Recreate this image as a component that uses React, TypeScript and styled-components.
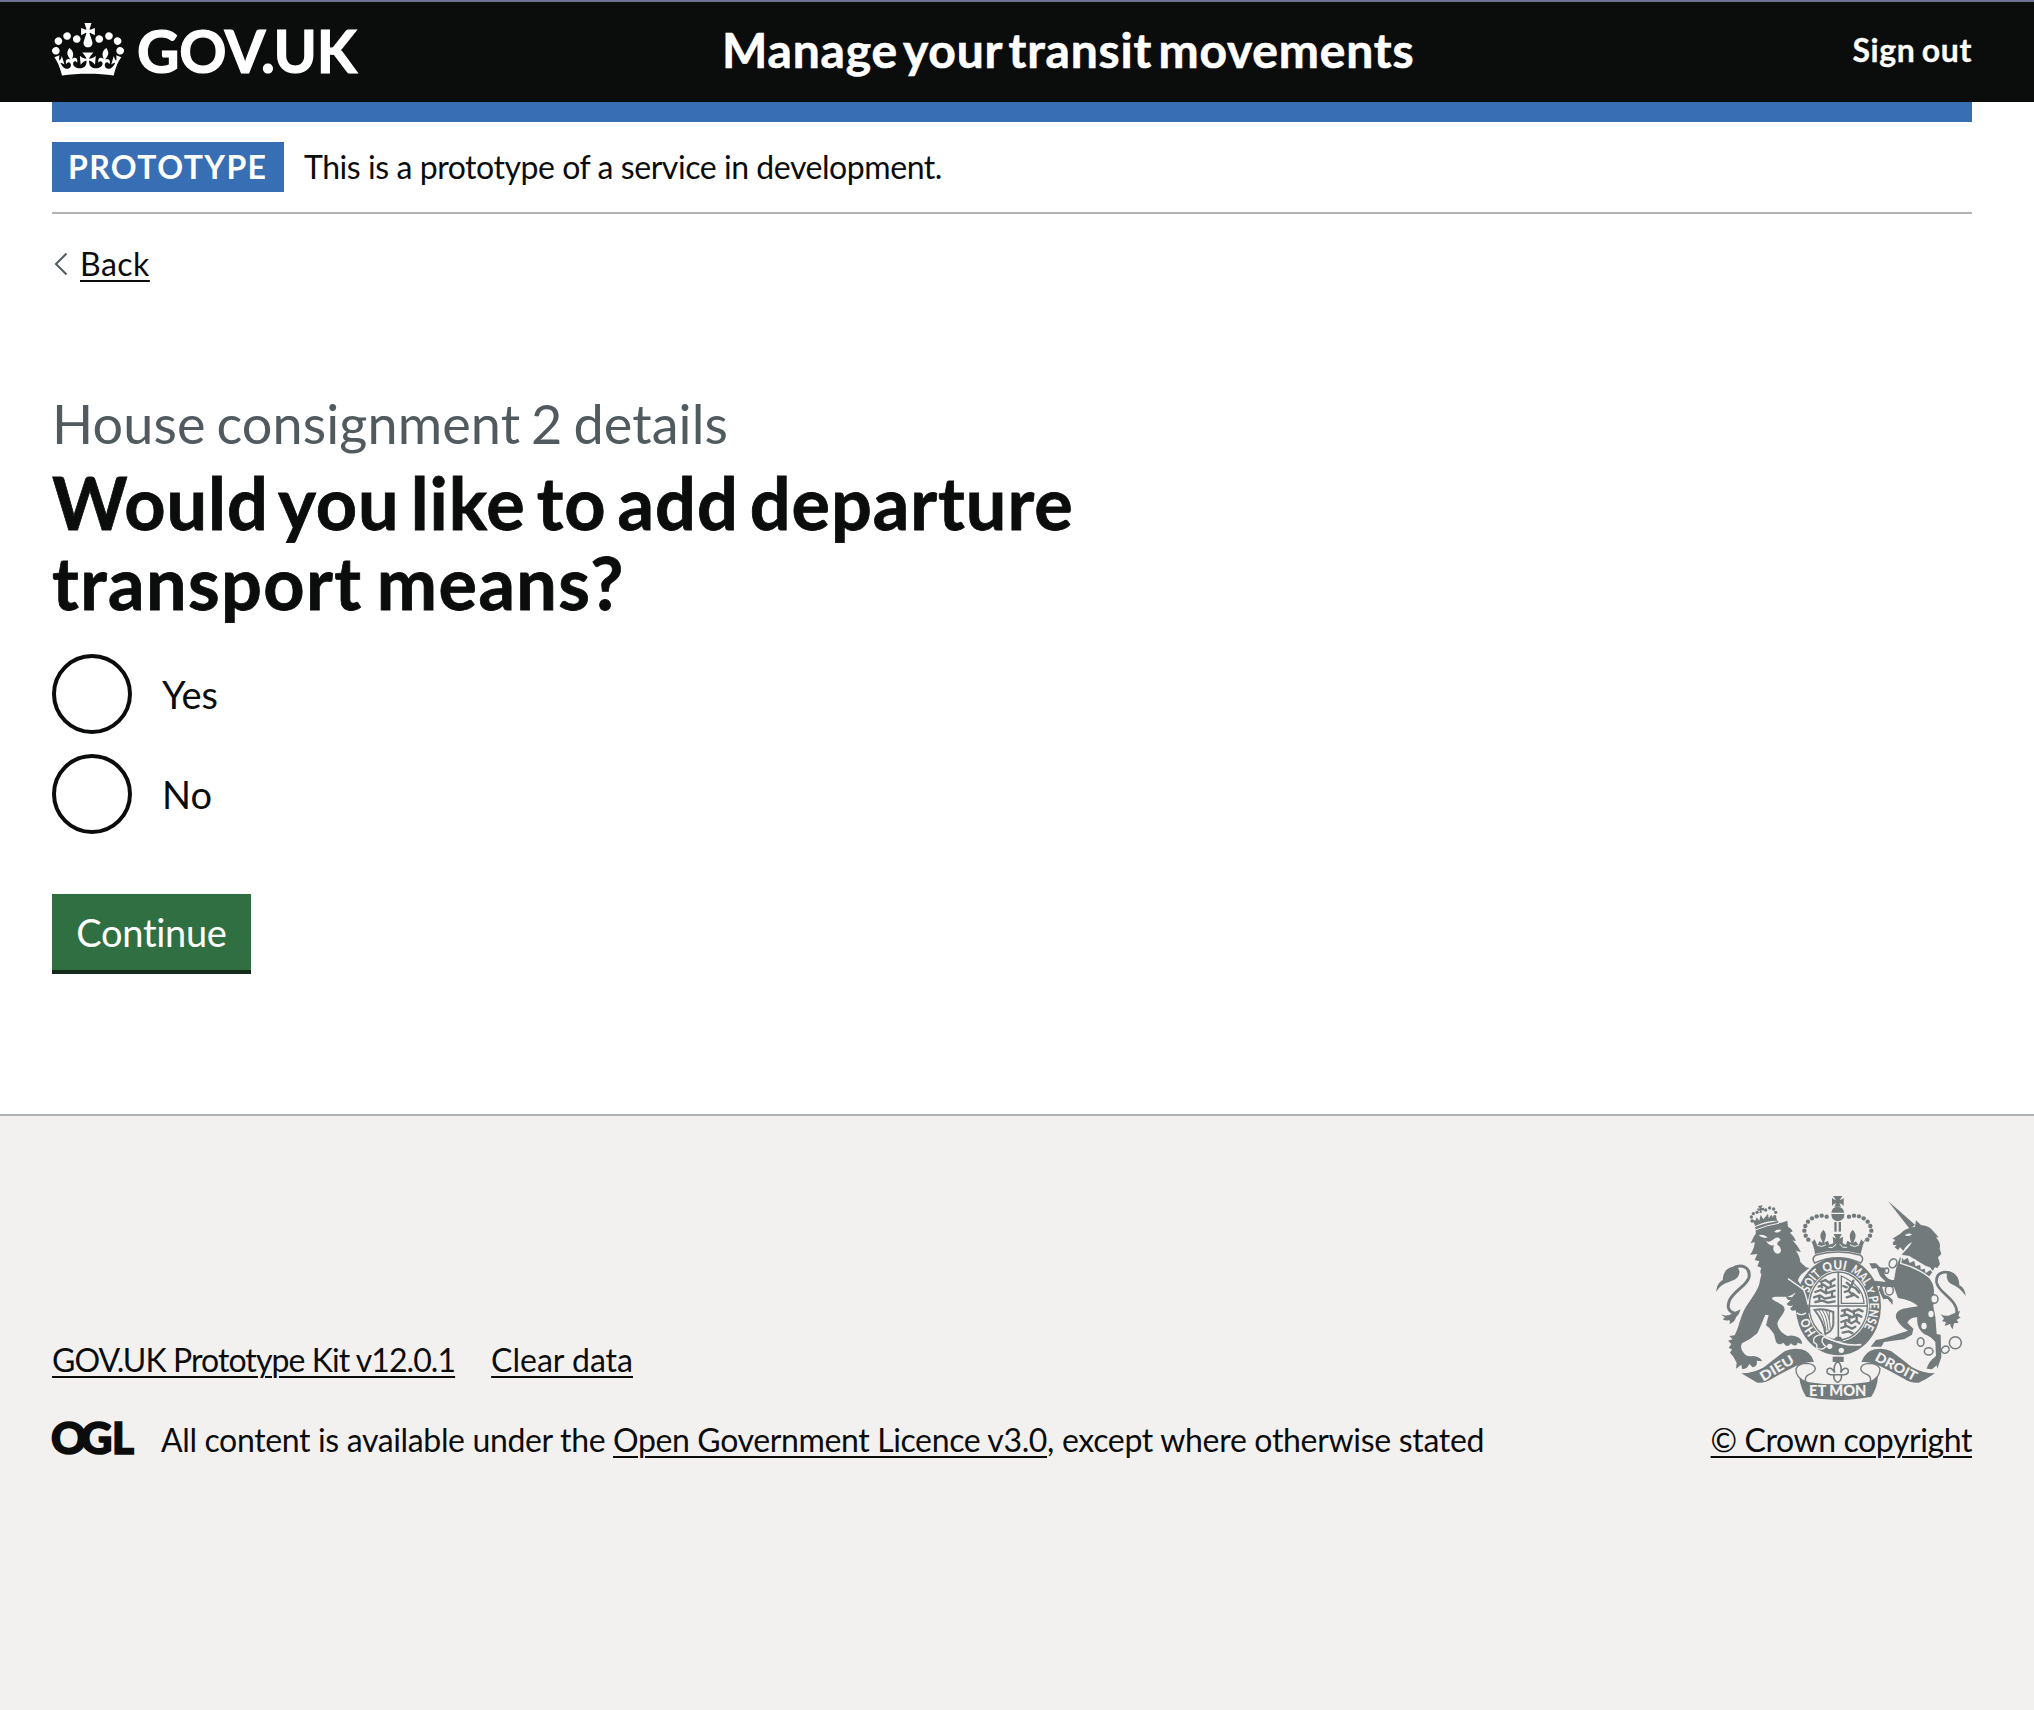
import React from "react";
import styled, { createGlobalStyle } from "styled-components";

const ink = "#0b0c0c";
const blue = "#386eb4";
const crestGrey = "#727a7c";
const footerGrey = "#f3f1f0";

const GlobalStyle = createGlobalStyle`
  html, body { margin: 0; padding: 0; background: #fff; }
  body {
    font-family: Lato, "Noto Sans", Arial, sans-serif;
    color: ${ink};
    -webkit-font-smoothing: antialiased;
  }
  *, *::before, *::after { box-sizing: border-box; }
`;

const Page = styled.div`
  display: flex;
  flex-direction: column;
  min-height: 1710px;
`;

const Container = styled.div`
  margin: 0 62px 0 52px;
`;

const Header = styled.header`
  background: ${ink};
  color: #fff;
  border-top: 2px solid #70728f;
  height: 102px;
`;

const HeaderRow = styled(Container)`
  display: grid;
  grid-template-columns: 670px 1fr auto;
  align-items: center;
  height: 96px;
`;

const Logo = styled.a`
  display: flex;
  align-items: center;
  color: #fff;
  text-decoration: none;
`;

const Crown = styled.svg`
  width: 72px;
  height: 53px;
  margin: 0 13px 2px 0;
`;

const LogoText = styled.span`
  font-size: 58.5px;
  line-height: 96px;
  font-weight: 700;
  letter-spacing: -0.3px;
  -webkit-text-stroke: 1.2px #fff;
`;

const ServiceName = styled.span`
  font-size: 48px;
  line-height: 60px;
  font-weight: 700;
  letter-spacing: 0.8px;
  word-spacing: -6.2px;
  -webkit-text-stroke: 0.6px #fff;
`;

const SignOut = styled.a`
  font-size: 32px;
  line-height: 40px;
  font-weight: 700;
  letter-spacing: 0.6px;
  word-spacing: -2px;
  -webkit-text-stroke: 0.3px #fff;
`;

const BlueBar = styled.div`
  height: 20px;
  background: ${blue};
`;

const PhaseBanner = styled.div`
  display: flex;
  align-items: center;
  gap: 20px;
  padding: 20px 0;
  border-bottom: 2px solid #b2b3b4;
`;

const Tag = styled.strong`
  display: block;
  width: 232px;
  padding-left: 16px;
  background: ${blue};
  color: #fff;
  font-size: 32px;
  line-height: 50px;
  font-weight: 700;
  letter-spacing: 1.4px;
  white-space: nowrap;
`;

const Text = styled.span<{ $track?: number }>`
  font-size: 32px;
  line-height: 40px;
  letter-spacing: ${(p) => p.$track ?? 0}px;
  white-space: pre;
`;

const Link = styled.a<{ $track?: number }>`
  font-size: 32px;
  line-height: 40px;
  letter-spacing: ${(p) => p.$track ?? 0}px;
  color: ${ink};
  text-decoration: underline;
  text-decoration-thickness: 2px;
  text-underline-offset: 4px;
  white-space: nowrap;
`;

const BackRow = styled.div`
  display: flex;
  align-items: center;
  margin-top: 30px;
  height: 40px;
`;

const Chevron = styled.svg`
  width: 14px;
  height: 24px;
  margin: 0 12px 1px 2px;
`;

const Main = styled.main`
  padding-top: 110px;
  height: 830px;
`;

const Caption = styled.span`
  display: block;
  color: #505a5f;
  font-size: 54px;
  line-height: 60px;
  letter-spacing: 0.1px;
  word-spacing: -3px;
`;

const Heading = styled.h1`
  margin: 8px 0 32px;
  font-size: 72px;
  line-height: 80px;
  font-weight: 700;
  -webkit-text-stroke: 0.8px ${ink};
`;

const HeadingLine = styled.span<{ $track: number; $word: number }>`
  display: block;
  letter-spacing: ${(p) => p.$track}px;
  word-spacing: ${(p) => p.$word}px;
`;

const Radios = styled.div`
  display: flex;
  flex-direction: column;
  gap: 20px;
`;

const RadioRow = styled.label`
  display: flex;
  align-items: center;
  gap: 30px;
  height: 80px;
  font-size: 38px;
  line-height: 50px;
`;

const RadioInput = styled.input`
  appearance: none;
  margin: 0;
  width: 80px;
  height: 80px;
  border: 4px solid ${ink};
  border-radius: 50%;
  background: transparent;
`;

const Button = styled.button`
  display: block;
  margin-top: 60px;
  width: 199px;
  height: 80px;
  padding: 0;
  border: 0;
  border-bottom: 4px solid #142b1c;
  background: #2f6f42;
  color: #fff;
  font-family: inherit;
  font-size: 38px;
  line-height: 38px;
  letter-spacing: -0.3px;
`;

const Footer = styled.footer`
  flex: 1;
  border-top: 2px solid #b2b3b4;
  background: ${footerGrey};
  padding-top: 79px;
`;

const FooterRow = styled(Container)`
  display: flex;
  justify-content: space-between;
  align-items: flex-end;
`;

const FooterLinks = styled.div`
  display: flex;
  gap: 36px;
  margin-bottom: 40px;
`;

const Licence = styled.div`
  display: flex;
  align-items: center;
  height: 40px;
`;

const OglLogo = styled.svg`
  width: 82px;
  height: 34px;
  margin: 0 27px 5px 0;
  overflow: visible;
`;

const Copyright = styled.div`
  display: flex;
  flex-direction: column;
  align-items: flex-end;
`;

const Crest = styled.svg`
  width: 252px;
  height: 206px;
  margin: 0 5px 19px 0;
  display: block;
`;

const ARC_BEADS: [number, number][] = [
  [380, 110], [365, 107], [350, 109], [336, 115], [324, 125],
  [316, 138], [313, 152], [317, 167], [325, 179],
];

const LION_CROWN_BEADS: [number, number][] = [
  [171, 97], [160, 101], [154, 111], [156, 123], [197, 90], [209, 84], [221, 87], [227, 97], [224, 110],
];

function CrownGlyph() {
  return (
    <Crown viewBox="0 0 132 97" aria-hidden="true">
      <path
        fill="currentColor"
        fillRule="evenodd"
        d="M25 30.2c3.5 1.5 7.7-.2 9.1-3.7 1.5-3.6-.2-7.8-3.9-9.2-3.6-1.4-7.6.3-9.1 3.9-1.4 3.5.3 7.5 3.9 9zM9 39.5c3.6 1.5 7.8-.2 9.2-3.7 1.5-3.6-.2-7.8-3.9-9.1-3.6-1.5-7.6.2-9.1 3.8-1.4 3.5.3 7.5 3.8 9zM4.4 57.2c3.5 1.5 7.7-.2 9.1-3.8 1.5-3.6-.2-7.7-3.9-9.1-3.5-1.5-7.6.3-9.1 3.8-1.4 3.5.3 7.6 3.9 9.1zm38.3-21.4c3.5 1.5 7.7-.2 9.1-3.8 1.5-3.6-.2-7.7-3.9-9.1-3.6-1.5-7.6.3-9.1 3.8-1.3 3.6.4 7.7 3.9 9.1zm64.4-5.6c-3.6 1.5-7.8-.2-9.1-3.7-1.5-3.6.2-7.8 3.8-9.2 3.6-1.4 7.7.3 9.2 3.9 1.3 3.5-.4 7.5-3.9 9zm15.9 9.3c-3.6 1.5-7.7-.2-9.1-3.7-1.5-3.6.2-7.8 3.7-9.1 3.6-1.5 7.7.2 9.2 3.8 1.5 3.5-.3 7.5-3.8 9zm4.7 17.7c-3.6 1.5-7.8-.2-9.2-3.8-1.5-3.6.2-7.7 3.9-9.1 3.6-1.5 7.7.3 9.2 3.8 1.3 3.5-.4 7.6-3.9 9.1zM89.3 35.8c-3.6 1.5-7.8-.2-9.2-3.8-1.4-3.6.2-7.7 3.9-9.1 3.6-1.5 7.7.3 9.2 3.8 1.4 3.6-.3 7.7-3.9 9.1zM69.7 17.7l8.9 4.7V9.3l-8.9 2.8c-.2-.3-.5-.6-.9-.9L72.4 0H59.6l3.5 11.2c-.3.3-.6.5-.9.9l-8.8-2.8v13.1l8.8-4.7c.3.3.6.7.9.9l-5 15.4v.1c-.2.8-.4 1.6-.4 2.4 0 4.1 3.1 7.5 7 8.1h.2c.3 0 .7.1 1 .1.4 0 .7 0 1-.1h.2c4-.6 7.1-4.1 7.1-8.1 0-.8-.1-1.7-.4-2.4V34l-5.1-15.4c.4-.2.7-.6 1-.9zM66 92.8c16.9 0 32.8 1.1 47.1 3.2 4-16.9 8.9-26.7 14-33.5l-9.6-3.4c1 4.9 1.1 7.2 0 10.2-1.5-1.4-3-4.3-4.2-8.7L108.6 76c2.8-2 5-3.2 7.5-3.3-4.4 9.4-10 11.9-13.6 11.2-4.3-.8-6.3-4.6-5.6-7.9 1-4.7 5.7-5.9 8-.5 4.3-8.7-3-11.4-7.6-8.8 7.1-7.2 7.9-13.5 2.1-21.1-8 6.1-8.1 12.3-4.5 20.8-4.7-5.4-12.1-2.5-9.5 6.2 3.4-5.2 7.9-2 7.2 3.1-.6 4.3-6.4 7.8-13.5 7.2-10.3-.9-10.9-8-11.2-13.8 2.5-.5 7.1 1.8 11 7.3L80.2 60c-4.1 4.4-8 5.3-12.3 5.4 1.4-4.4 8-11.6 8-11.6H55.5s6.4 7.2 7.9 11.6c-4.2-.1-8-1-12.3-5.4l1.4 16.4c3.9-5.5 8.5-7.7 10.9-7.3-.3 5.8-.9 12.8-11.1 13.8-7.2.6-12.9-2.9-13.5-7.2-.7-5 3.8-8.3 7.1-3.1 2.7-8.7-4.6-11.6-9.4-6.2 3.7-8.5 3.6-14.7-4.6-20.8-5.8 7.6-5 13.9 2.2 21.1-4.7-2.6-11.9.1-7.7 8.8 2.3-5.5 7.1-4.2 8.1.5.7 3.3-1.3 7.1-5.7 7.9-3.5.7-9-1.8-13.5-11.2 2.5.1 4.7 1.3 7.5 3.3l-4.7-15.4c-1.2 4.4-2.7 7.2-4.3 8.7-1.1-3-.9-5.3 0-10.2l-9.5 3.4c5 6.9 9.9 16.7 14 33.5 14.8-2.1 30.8-3.2 47.7-3.2z"
      />
    </Crown>
  );
}

function RoyalArms() {
  const c = crestGrey;
  const b = footerGrey;
  const word = { fontFamily: "Lato, sans-serif", fontWeight: 900, fontSize: 38, fill: b, lengthAdjust: "spacingAndGlyphs" as const };
  return (
    <Crest viewBox="45 45 756 618" aria-hidden="true">
      {/* lion: tail, body, crown */}
      <g fill={c}>
        <path d="M49 336C50 318 55 308 68 300C70 280 76 266 96 261C114 260 120 268 118 280C114 302 88 304 72 312C62 318 54 326 49 336Z" />
        <path d="M96 266C124 248 152 262 147 292C140 318 104 330 88 362C80 384 86 398 112 402" fill="none" stroke={c} strokeWidth="9" />
        <path d="M64 403Q82 412 98 399L122 388Q118 404 108 412Q104 428 88 432Q92 424 88 420Q78 424 68 418Q76 414 74 411Q68 409 64 403Z" />
        <path d="M166 146C190 140 235 132 262 122L264 140Q276 146 278 154L270 158Q282 168 288 184L278 181Q292 196 303 216L288 212Q300 230 301 246L318 262L328 264L310 278Q296 288 294 302L312 330L326 372L330 398L314 404L306 396Q296 404 290 398L286 390Q276 396 270 386L280 376Q266 382 260 372L272 360Q262 362 258 350L276 352L286 340L262 298L292 330Q284 344 262 350L226 350Q212 352 217 358C232 370 254 372 254 388C252 404 234 416 232 432Q236 456 262 468Q280 464 294 472Q306 478 306 492L292 488Q294 498 280 496L272 490Q268 502 256 496L250 488Q236 498 228 486L222 462L208 444L198 436L206 406L196 404Q182 438 172 460Q150 480 126 490Q118 506 132 520Q140 532 160 528Q184 532 186 544L170 542Q174 558 158 562L148 552Q140 570 126 566L124 554L108 566L110 548L100 530L90 518L96 508L86 504L94 492L84 482L98 478L88 468L104 466C118 440 120 410 138 380C158 350 178 326 180 300L184 284Q178 276 184 264L172 258L178 244L164 240L172 222L150 224Q164 206 164 186L152 190Q160 170 168 160Z" />
        <path d="M164 142C184 132 212 128 236 122L232 132C210 138 190 142 172 150Z" />
        <path d="M164 134L156 118L166 122L170 112L178 122L182 104L190 118L204 101L206 115L214 104L220 114L226 106L232 122Q196 122 166 138Z" />
        {LION_CROWN_BEADS.map(([x, y]) => <circle key={x} cx={x} cy={y} r="5" />)}
        <path d="M174 78L188 76L184 84L192 83L192 92L184 90L186 98L178 99L180 91L173 94L172 85L179 86Z" />
      </g>
      <g fill={b}>
        <path d="M176 166Q190 160 203 172Q190 178 176 166ZM222 156Q232 146 244 150Q238 160 222 156Z" />
        <path d="M198 182Q206 188 214 182L226 174Q238 170 242 180Q230 186 232 194Q246 202 242 216Q232 228 222 214Q218 206 222 196Q206 198 198 182Z" />
        <path d="M166 150Q204 134 236 130" fill="none" stroke={b} strokeWidth="3" />
      </g>

      {/* unicorn: tail, body, horn */}
      <g fill={c}>
        <path d="M797 348C795 332 790 322 778 316C778 296 768 276 744 274C738 284 738 304 754 312C770 318 786 330 797 348Z" />
        <path d="M752 280C728 270 706 282 710 308C716 336 758 352 768 382C774 400 768 410 748 414" fill="none" stroke={c} strokeWidth="8" />
        <path d="M722 402Q738 412 752 404L780 392L775 408L782 412L770 420L776 428L762 430L758 448Q752 442 750 432L734 438L738 426L726 424L732 416Z" />
        <path d="M564 63L645 134L630 148Z" />
        <path d="M645 140L648 121L663 135Q690 138 700 154L716 172L708 172Q724 190 719 206L724 222L714 232L720 252L712 264L704 262L698 274L690 262L678 258L654 244L628 228L604 224Q628 202 636 186Q620 194 610 212L600 202L594 210L584 202L590 194L580 196L578 188L586 180L577 176L600 162Q614 144 645 140Z" />
        <path d="M600 232Q592 252 588 266L582 300L576 300Q556 296 552 276L562 280L558 264L540 262L528 250L508 250L516 266L530 264L540 288L558 306L524 302L528 318L540 318L536 330L550 358L562 356L578 374L578 360L568 350L554 344L546 320L582 322L594 354Q634 360 654 378C630 386 584 380 588 414Q600 440 624 452L548 476L528 480L512 500L544 500L552 486L612 478L636 464L640 446L622 428Q630 412 652 412Q648 444 672 462Q694 470 706 486L708 528Q684 546 680 566L696 568L710 556L712 566L724 532L722 464L710 462L706 410L700 380L702 330Q700 306 682 288Z" />
      </g>
      <path d="M606 226L612 238L624 230L630 246L644 240L648 256L662 252L664 266L676 264L678 276L690 268L700 276L688 292Q650 262 602 250Z" fill={c} stroke={b} strokeWidth="4" />
      <path d="M614 166Q622 158 636 162Q630 172 614 166Z" fill={b} />
      <g fill="none" stroke={c} strokeWidth="4.5">
        <ellipse cx="579" cy="250" rx="11" ry="14" transform="rotate(25 579 250)" />
        <ellipse cx="568" cy="331" rx="12" ry="14" />
        <ellipse cx="703" cy="357" rx="11" ry="13" fill={b} />
        <ellipse cx="662" cy="486" rx="10" ry="13" />
        <ellipse cx="686" cy="514" rx="13" ry="11" />
        <ellipse cx="736" cy="509" rx="12" ry="10" transform="rotate(-35 736 509)" />
        <circle cx="766" cy="488" r="18" />
      </g>
      <g fill={b}>
        <ellipse cx="693" cy="402" rx="8" ry="10" />
        <ellipse cx="672" cy="438" rx="8" ry="10" />
        <ellipse cx="560" cy="272" rx="6" ry="8" stroke={c} strokeWidth="4" />
      </g>

      {/* crown over the shield */}
      <g fill={c}>
        <path d="M399 48H427L419 60Q427 58 431 53V78Q425 71 418 70L423 80H403L408 70Q401 71 396 78V53Q400 58 408 60Z" />
        <path d="M394 98Q396 80 413 80Q430 80 433 98Z" />
        <path d="M394 102H433Q434 122 413 124Q394 122 394 102Z" />
        <rect x="403" y="126" width="7" height="29" />
        <rect x="416" y="126" width="7" height="29" />
        {ARC_BEADS.map(([x, y]) => (
          <React.Fragment key={x + "-" + y}>
            <circle cx={x} cy={y} r="6.6" />
            <circle cx={827 - x} cy={y} r="6.6" />
          </React.Fragment>
        ))}
        <path d="M328 172L336 186L344 178L352 196L358 184L368 188L362 174Q358 162 370 149Q382 162 376 176L372 188L384 182L388 194L400 190L398 170L408 176L401 162H425L418 176L429 170L428 190L438 194L442 182L454 188L450 176Q446 162 458 149Q470 162 466 174L460 188L468 184L476 196L484 178L490 186L499 172Q486 196 482 222Q448 212 413 212Q378 212 345 222Q342 196 328 172Z" />
      </g>
      <path d="M352 196Q366 204 378 194M386 202Q400 206 408 192M419 192Q427 206 441 202M450 194Q462 204 476 196" fill="none" stroke={b} strokeWidth="3" />

      {/* garter and shield */}
      <ellipse cx="415" cy="379" rx="128" ry="147" fill={c} />
      <path d="M346 226Q413 206 482 226Q494 236 482 249Q413 218 344 249Q334 236 346 226Z" fill={b} stroke={c} strokeWidth="4.5" />
      <ellipse cx="415" cy="378" rx="92" ry="107" fill={b} />
      <ellipse cx="415" cy="378" rx="87" ry="102" fill="none" stroke={c} strokeWidth="4" />
      <path d="M415 276V480M328 378H502" stroke={c} strokeWidth="5" />
      <g fill="none" stroke={c} strokeWidth="7" strokeLinecap="round" strokeLinejoin="round">
        <path d="M362 306L376 300L388 308L404 298M356 320L370 314L384 324L404 316M346 336L362 330L378 340L404 332M342 352L360 346L374 356L404 350M346 366L366 362L384 368L404 364M366 312V322M392 304V314M378 328V336M396 336V346M358 350V360" />
        <path d="M426 392L442 388L458 396L476 388L488 394M424 408L440 404L456 412L472 404L484 410M424 426L440 420L454 430L468 422L478 430M424 444L440 438L456 446L466 440M428 458L446 454L458 460M434 394V404M462 392V402M448 410V420M470 410V420M436 428V438" />
        <path d="M440 308L452 318L446 332L434 336M452 318L466 324L478 338M446 332L458 346L440 352M458 340L474 352M460 302L456 314M430 318L440 322" />
      </g>
      <path d="M424 288V370H492Q490 318 424 288Z" fill="none" stroke={c} strokeWidth="4" />
      <g fill="none" stroke={c}>
        <path d="M344 390Q372 384 400 396V434Q396 456 376 462Q372 426 344 390Z" strokeWidth="6" />
        <path d="M356 390Q372 410 378 452M366 390Q382 410 384 452M377 392Q389 410 391 446M388 394V420" strokeWidth="3" />
      </g>
      <path d="M400 483L408 470H422L430 483Z" fill={c} />

      <path id="garter-line" d="M354.8 462.5A94 110 0 1 1 475.2 462.5" fill="none" />
      <text {...word}><textPath href="#garter-line" startOffset="8" textLength="52" lengthAdjust="spacingAndGlyphs">HO</textPath></text>
      <text {...word}><textPath href="#garter-line" startOffset="133" textLength="66" lengthAdjust="spacingAndGlyphs">SOIT</textPath></text>
      <text {...word}><textPath href="#garter-line" startOffset="210" textLength="66" lengthAdjust="spacingAndGlyphs">QUI</textPath></text>
      <text {...word}><textPath href="#garter-line" startOffset="290" textLength="62" lengthAdjust="spacingAndGlyphs">MAL</textPath></text>
      <text {...word} fontSize={29}><textPath href="#garter-line" startOffset="360">Y</textPath></text>
      <text {...word}><textPath href="#garter-line" startOffset="385" textLength="96" lengthAdjust="spacingAndGlyphs">PENSE</textPath></text>
      <path d="M262 298L292 326Q306 344 326 374L328 400L300 404L290 384L300 352Z" fill={c} />
      <path d="M264 296L310 328Q318 344 324 374M290 398Q304 410 318 398" fill="none" stroke={b} strokeWidth="4" />
      <path d="M346 470Q366 458 376 470Q366 472 366 484Q370 496 378 500Q366 512 350 504Q354 492 342 488Q338 476 346 470Z" fill={c} stroke={b} strokeWidth="4" />
      <path d="M376 470Q430 500 484 494" fill="none" stroke={b} strokeWidth="5" />
      <circle cx="389" cy="499" r="8" fill={b} />
      <circle cx="424" cy="511" r="8" fill={b} />

      {/* motto ribbon */}
      <g fill={c}>
        <path d="M124 580Q160 580 192 562Q224 536 254 514Q276 502 304 508Q332 514 342 546Q318 544 298 556L288 558Q248 578 216 596Q196 610 172 608Q150 596 124 580Z" />
        <path d="M705 580Q668 580 636 562Q604 536 574 514Q552 502 524 508Q496 514 484 546Q510 544 530 556L540 558Q580 578 612 596Q632 610 656 608Q680 598 705 580Z" />
        <path d="M298 594Q310 604 328 607Q414 620 500 607Q520 604 534 590Q532 622 514 650Q460 660 413 660Q366 660 318 650Q302 624 298 594Z" />
      </g>
      <g fill={b} stroke={c} strokeWidth="4">
        <path d="M318 606Q286 592 288 566Q296 550 322 550Q344 552 346 566Q344 578 326 584Q312 592 318 606Z" />
        <path d="M510 606Q540 592 540 566Q532 550 506 550Q484 552 482 566Q484 578 502 584Q516 592 510 606Z" />
      </g>
      <text {...word} fontSize={40} transform="translate(190 605) rotate(-31)" textLength="112">DIEU</text>
      <text {...word} fontSize={40} transform="translate(522 540) rotate(28)" textLength="136">DROIT</text>
      <text {...word} fontSize={44} x="327" y="649" textLength="172">ET MON</text>
      <path d="M398 530H431V546H398Z" fill={c} />
      <path d="M413 544Q428 556 422 578Q432 558 444 568Q448 582 434 584L424 584Q426 596 420 602Q413 612 406 602Q400 596 402 584L392 584Q378 582 382 568Q394 558 404 578Q398 556 413 544ZM400 584H428" fill={b} stroke={c} strokeWidth="4.5" />
    </Crest>
  );
}

export default function App() {
  return (
    <Page>
      <GlobalStyle />
      <Header>
        <HeaderRow>
          <Logo>
            <CrownGlyph />
            <LogoText>GOV.UK</LogoText>
          </Logo>
          <ServiceName>Manage your transit movements</ServiceName>
          <SignOut>Sign out</SignOut>
        </HeaderRow>
      </Header>
      <Container>
        <BlueBar />
        <PhaseBanner>
          <Tag>PROTOTYPE</Tag>
          <Text $track={-0.44}>This is a prototype of a service in development.</Text>
        </PhaseBanner>
        <BackRow>
          <Chevron viewBox="0 0 14 24" aria-hidden="true">
            <path d="M12.5 1.5L2 12L12.5 22.5" fill="none" stroke="#505a5f" strokeWidth="2" />
          </Chevron>
          <Link $track={0.5}>Back</Link>
        </BackRow>
        <Main>
          <Caption>House consignment 2 details</Caption>
          <Heading>
            <HeadingLine $track={0.95} $word={-7.4}>Would you like to add departure</HeadingLine>
            <HeadingLine $track={1.4} $word={-4.5}>transport means?</HeadingLine>
          </Heading>
          <Radios>
            <RadioRow><RadioInput type="radio" name="transport" />Yes</RadioRow>
            <RadioRow><RadioInput type="radio" name="transport" />No</RadioRow>
          </Radios>
          <Button>Continue</Button>
        </Main>
      </Container>
      <Footer>
        <FooterRow>
          <div>
            <FooterLinks>
              <Link $track={-0.93}>GOV.UK Prototype Kit v12.0.1</Link>
              <Link>Clear data</Link>
            </FooterLinks>
            <Licence>
              <OglLogo viewBox="0 0 82 34" aria-hidden="true">
                <text
                  y="32.5"
                  fontFamily="Lato, sans-serif"
                  fontWeight="900"
                  fontSize="44"
                  fill={ink}
                  stroke={ink}
                  strokeWidth="1.6"
                >
                  <tspan x="-1">O</tspan>
                  <tspan x="28.5">G</tspan>
                  <tspan x="60" textLength="22" lengthAdjust="spacingAndGlyphs">L</tspan>
                </text>
              </OglLogo>
              <span>
                <Text $track={-0.354}>All content is available under the </Text>
                <Link $track={-0.37}>Open Government Licence v3.0</Link>
                <Text $track={-0.31}>, except where otherwise stated</Text>
              </span>
            </Licence>
          </div>
          <Copyright>
            <RoyalArms />
            <Link $track={-0.41}>© Crown copyright</Link>
          </Copyright>
        </FooterRow>
      </Footer>
    </Page>
  );
}
